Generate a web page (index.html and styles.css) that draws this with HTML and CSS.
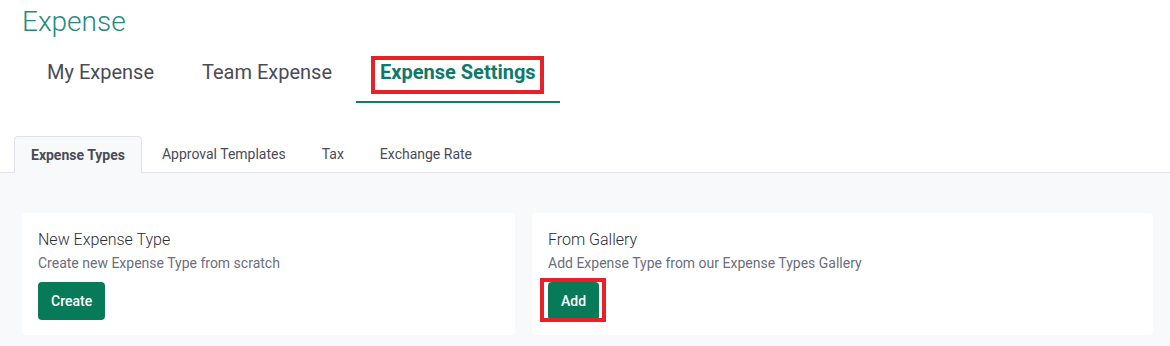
FILE: index.html
```html
<!DOCTYPE html>
<html>
<head>
<meta charset="utf-8">
<link rel="stylesheet" href="styles.css">
</head>
<body>
  <header class="page-head">
    <h1 class="page-title">Expense</h1>
    <nav class="main-tabs">
      <a class="main-tab">My Expense</a>
      <a class="main-tab">Team Expense</a>
      <a class="main-tab active"><span class="mark mark-tab"></span>Expense Settings</a>
    </nav>
  </header>
  <nav class="sub-tabs">
    <a class="sub-tab active">Expense Types</a>
    <a class="sub-tab">Approval Templates</a>
    <a class="sub-tab">Tax</a>
    <a class="sub-tab">Exchange Rate</a>
  </nav>
  <main class="content">
    <section class="card">
      <h2 class="card-title">New Expense Type</h2>
      <p class="card-text">Create new Expense Type from scratch</p>
      <div class="btn-wrap"><button class="btn">Create</button></div>
    </section>
    <section class="card">
      <h2 class="card-title">From Gallery</h2>
      <p class="card-text">Add Expense Type from our Expense Types Gallery</p>
      <div class="btn-wrap"><button class="btn">Add</button><span class="mark mark-btn"></span></div>
    </section>
  </main>
</body>
</html>
```

FILE: styles.css
```css
* { box-sizing: border-box; }
html, body { margin: 0; padding: 0; }
body {
  font-family: Roboto, "Liberation Sans", Arial, sans-serif;
  background: #ffffff;
  width: 1170px;
  height: 346px;
  overflow: hidden;
}
.page-head {
  padding: 6px 0 0 22px;
}
.page-title {
  margin: 0;
  font-size: 28px;
  line-height: 32px;
  font-weight: 300;
  color: #1f8a80;
}
.main-tabs {
  display: flex;
  margin-top: 22px;
}
.main-tab {
  position: relative;
  padding: 0 24px 17px;
  font-size: 20px;
  line-height: 24px;
  color: #4a4b57;
  border-bottom: 2px solid transparent;
}
.main-tab:first-child {
  padding-left: 25px;
}
.main-tab.active {
  font-weight: 700;
  color: #0f7a6b;
  border-bottom-color: #0e7b6b;
}
.mark {
  position: absolute;
  border: 4px solid #e8202a;
  pointer-events: none;
}
.mark-tab {
  left: 15px;
  right: 16px;
  top: -4px;
  bottom: 7px;
}
.sub-tabs {
  display: flex;
  margin-top: 33px;
  padding-left: 14px;
  border-bottom: 1px solid #e2e2e8;
  height: 37px;
}
.sub-tab {
  display: flex;
  align-items: center;
  height: 36px;
  padding: 0 18px;
  font-size: 14px;
  color: #4a4b57;
}
.sub-tab.active {
  padding: 0 16px;
  margin-right: 2px;
  height: 37px;
  margin-bottom: -1px;
  font-weight: 700;
  background: #f8f9fb;
  border: 1px solid #e2e2e8;
  border-bottom: none;
  border-radius: 4px 4px 0 0;
}
.content {
  display: grid;
  grid-template-columns: 493px 1fr;
  gap: 17px;
  padding: 40px 17px 11px 22px;
  background: #f8f9fb;
}
.card {
  background: #ffffff;
  border-radius: 4px;
  padding: 17px 16px 15px;
}
.card-title {
  margin: 0;
  font-size: 16px;
  line-height: 20px;
  font-weight: 300;
  color: #2b2b35;
}
.card-text {
  margin: 3px 0 0;
  font-size: 14px;
  line-height: 20px;
  color: #6b6e7d;
}
.btn-wrap {
  position: relative;
  display: inline-block;
  margin-top: 9px;
}
.btn {
  display: block;
  height: 38px;
  padding: 0 13px;
  border: none;
  border-radius: 4px;
  background: #077a58;
  color: #ffffff;
  font-family: Roboto, "Liberation Sans", Arial, sans-serif;
  font-size: 14px;
  font-weight: 500;
}
.mark-btn {
  left: -8px;
  right: -7px;
  top: -4px;
  bottom: -2px;
}
```
